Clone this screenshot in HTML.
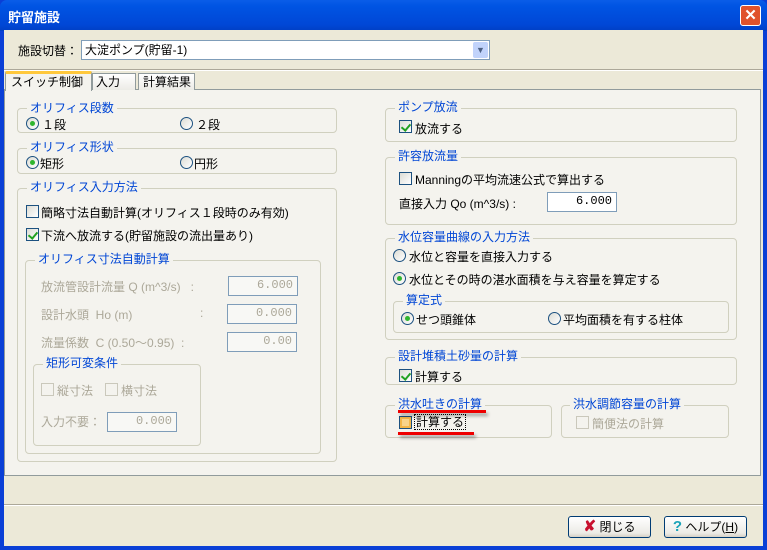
<!DOCTYPE html>
<html><head><meta charset="utf-8"><style>
*{box-sizing:border-box;margin:0;padding:0}
body{width:767px;height:550px;overflow:hidden;background:#0a3fd6;font-family:"Liberation Sans","Noto Sans CJK JP",sans-serif;font-size:12px;color:#000;position:relative}
.a{position:absolute;white-space:nowrap}
#title{left:0;top:0;width:767px;height:31px;background:linear-gradient(#0a5de8,#0054e3 20%,#0047d6 80%,#003fc4);border-radius:7px 7px 0 0}
#client{left:4px;top:30px;width:759px;height:516px;background:#ece9d8}
.grp{position:absolute;border:1px solid #d0d0bf;border-radius:4px}
.gt{position:absolute;background:#f4f3ee;color:#0046d5;padding:0 3px;white-space:nowrap;line-height:13px}
.cb{position:absolute;width:13px;height:13px;border:1px solid #1c5180;background:linear-gradient(135deg,#dcdcd5,#fff)}
.cb.dis{border-color:#cac8bb;background:#f4f3ee}
.chk::after{content:"";position:absolute;left:3px;top:1px;width:4px;height:7px;border:solid #21a121;border-width:0 2px 2px 0;transform:rotate(40deg)}
.rb{position:absolute;width:13px;height:13px;border:1px solid #1c5180;border-radius:50%;background:linear-gradient(135deg,#dcdcd5,#fff)}
.rb.on::after{content:"";position:absolute;left:3px;top:3px;width:5px;height:5px;border-radius:50%;background:#2fb52f}
.in{position:absolute;border:1px solid #7f9db9;background:#fff;text-align:right;padding-right:4px;line-height:17px;font-family:"Liberation Mono","Noto Sans CJK JP",monospace;font-size:12px}
.dis{color:#aca899}
.in.dis{background:#f8f8f5}
.btn{position:absolute;border:1px solid #003c74;border-radius:3px;background:linear-gradient(#fff,#ecebe6 80%,#d6d0c5);text-align:center;line-height:20px}
</style></head><body>
<div id="title" class="a"></div>
<div class="a" style="left:8px;top:7px;color:#fff;font-weight:bold;font-size:13px">貯留施設</div>
<div class="a" style="left:740px;top:5px;width:21px;height:21px;border:1px solid #fff;border-radius:3px;background:#e0522c;color:#fff;font-weight:bold;text-align:center;line-height:19px;font-size:15px">✕</div>
<div id="client" class="a"></div>
<div class="a" style="left:18px;top:42px">施設切替：</div>
<div class="a" style="left:81px;top:40px;width:409px;height:20px;border:1px solid #7f9db9;background:#fff;padding-left:3px;line-height:18px">大淀ポンプ(貯留-1)</div>
<div class="a" style="left:473px;top:42px;width:15px;height:16px;background:#c1d3fb;border-radius:2px;color:#4d6185;font-size:9px;text-align:center;line-height:16px">▼</div>
<div class="a" style="left:4px;top:69px;width:759px;height:1px;background:#aca899"></div>
<div class="a" style="left:4px;top:70px;width:759px;height:1px;background:#fff"></div>
<!-- tab panel -->
<div class="a" style="left:4px;top:89px;width:757px;height:387px;background:#f4f3ee;border:1px solid #919b9c"></div>
<div class="a" style="left:92px;top:73px;width:44px;height:17px;border:1px solid #919b9c;border-bottom:none;background:linear-gradient(#fff,#ecebe6);padding-left:3px;line-height:16px">入力</div>
<div class="a" style="left:138px;top:73px;width:57px;height:17px;border:1px solid #919b9c;border-bottom:none;background:linear-gradient(#fff,#ecebe6);padding-left:4px;line-height:16px">計算結果</div>
<div class="a" style="left:5px;top:71px;width:87px;height:20px;border:1px solid #919b9c;border-top:3px solid #ffc83c;border-bottom:none;background:#f4f3ee;padding-left:5px;line-height:16px;border-radius:2px 2px 0 0">スイッチ制御</div>
<!-- bottom -->
<div class="a" style="left:4px;top:504px;width:759px;height:1px;background:#aca899"></div>
<div class="a" style="left:4px;top:505px;width:759px;height:1px;background:#fff"></div>

<!-- left groups -->
<div class="grp" style="left:17px;top:108px;width:320px;height:25px"></div>
<div class="gt" style="left:27px;top:102px">オリフィス段数</div>
<div class="rb on" style="left:26px;top:117px"></div><div class="a" style="left:42px;top:116px">１段</div>
<div class="rb" style="left:180px;top:117px"></div><div class="a" style="left:196px;top:116px">２段</div>

<div class="grp" style="left:17px;top:148px;width:320px;height:26px"></div>
<div class="gt" style="left:27px;top:141px">オリフィス形状</div>
<div class="rb on" style="left:26px;top:156px"></div><div class="a" style="left:40px;top:155px">矩形</div>
<div class="rb" style="left:180px;top:156px"></div><div class="a" style="left:194px;top:155px">円形</div>

<div class="grp" style="left:17px;top:188px;width:320px;height:274px"></div>
<div class="gt" style="left:27px;top:181px">オリフィス入力方法</div>
<div class="cb" style="left:26px;top:205px"></div><div class="a" style="left:41px;top:204px">簡略寸法自動計算(オリフィス１段時のみ有効)</div>
<div class="cb chk" style="left:26px;top:228px"></div><div class="a" style="left:41px;top:227px">下流へ放流する(貯留施設の流出量あり)</div>

<div class="grp" style="left:25px;top:260px;width:296px;height:194px"></div>
<div class="gt" style="left:35px;top:253px">オリフィス寸法自動計算</div>
<div class="a dis" style="left:41px;top:278px">放流管設計流量 Q (m^3/s)&nbsp;&nbsp;&nbsp;:</div>
<div class="in dis" style="left:228px;top:276px;width:70px;height:20px;color:#aca899">6.000</div>
<div class="a dis" style="left:41px;top:306px">設計水頭&nbsp;&nbsp;Ho (m)</div><div class="a dis" style="left:200px;top:306px">:</div>
<div class="in dis" style="left:227px;top:304px;width:70px;height:20px;color:#aca899">0.000</div>
<div class="a dis" style="left:41px;top:334px">流量係数&nbsp;&nbsp;C (0.50～0.95)&nbsp;&nbsp;:</div>
<div class="in dis" style="left:227px;top:332px;width:70px;height:20px;color:#aca899">0.00</div>

<div class="grp" style="left:33px;top:364px;width:168px;height:82px"></div>
<div class="gt" style="left:43px;top:357px">矩形可変条件</div>
<div class="cb dis" style="left:41px;top:383px"></div><div class="a dis" style="left:57px;top:382px">縦寸法</div>
<div class="cb dis" style="left:105px;top:383px"></div><div class="a dis" style="left:121px;top:382px">横寸法</div>
<div class="a dis" style="left:41px;top:413px">入力不要：</div>
<div class="in dis" style="left:107px;top:412px;width:70px;height:20px;color:#aca899">0.000</div>

<!-- right groups -->
<div class="grp" style="left:385px;top:108px;width:352px;height:34px"></div>
<div class="gt" style="left:395px;top:101px">ポンプ放流</div>
<div class="cb chk" style="left:399px;top:120px"></div><div class="a" style="left:415px;top:120px">放流する</div>

<div class="grp" style="left:385px;top:157px;width:352px;height:68px"></div>
<div class="gt" style="left:395px;top:150px">許容放流量</div>
<div class="cb" style="left:399px;top:172px"></div><div class="a" style="left:415px;top:171px">Manningの平均流速公式で算出する</div>
<div class="a" style="left:399px;top:195px">直接入力 Qo (m^3/s) :</div>
<div class="in" style="left:547px;top:192px;width:70px;height:20px">6.000</div>

<div class="grp" style="left:385px;top:238px;width:352px;height:102px"></div>
<div class="gt" style="left:395px;top:231px">水位容量曲線の入力方法</div>
<div class="rb" style="left:393px;top:249px"></div><div class="a" style="left:409px;top:248px">水位と容量を直接入力する</div>
<div class="rb on" style="left:393px;top:272px"></div><div class="a" style="left:409px;top:271px">水位とその時の湛水面積を与え容量を算定する</div>
<div class="grp" style="left:393px;top:301px;width:336px;height:32px"></div>
<div class="gt" style="left:403px;top:294px">算定式</div>
<div class="rb on" style="left:401px;top:312px"></div><div class="a" style="left:416px;top:311px">せつ頭錐体</div>
<div class="rb" style="left:548px;top:312px"></div><div class="a" style="left:563px;top:311px">平均面積を有する柱体</div>

<div class="grp" style="left:385px;top:357px;width:352px;height:28px"></div>
<div class="gt" style="left:395px;top:350px">設計堆積土砂量の計算</div>
<div class="cb chk" style="left:399px;top:369px"></div><div class="a" style="left:415px;top:368px">計算する</div>

<div class="grp" style="left:385px;top:405px;width:167px;height:33px"></div>
<div class="gt" style="left:395px;top:398px">洪水吐きの計算</div>
<div class="cb" style="left:399px;top:416px;border-color:#1c5180;background:#f9d48a;box-shadow:inset 0 0 0 2px #f3b74a"></div>
<div class="a" style="left:414px;top:414px;border:1px dotted #000;padding:0 1px;line-height:14px">計算する</div>
<div class="a" style="left:398px;top:410px;width:88px;height:3px;background:#ee0000;box-shadow:2px 3px 3px rgba(0,0,0,.35)"></div>
<div class="a" style="left:398px;top:432px;width:76px;height:3px;background:#ee0000;box-shadow:2px 3px 3px rgba(0,0,0,.35)"></div>

<div class="grp" style="left:561px;top:405px;width:168px;height:33px"></div>
<div class="gt" style="left:570px;top:398px">洪水調節容量の計算</div>
<div class="cb dis" style="left:576px;top:416px"></div><div class="a dis" style="left:592px;top:415px">簡便法の計算</div>

<!-- buttons -->
<div class="btn" style="left:568px;top:516px;width:83px;height:22px"><span style="color:#c8102e;font-weight:bold;font-size:15px">✘</span> 閉じる</div>
<div class="btn" style="left:664px;top:516px;width:83px;height:22px"><span style="color:#1aa3b8;font-weight:bold;font-size:15px">?</span> ヘルプ(<u>H</u>)</div>
</body></html>
